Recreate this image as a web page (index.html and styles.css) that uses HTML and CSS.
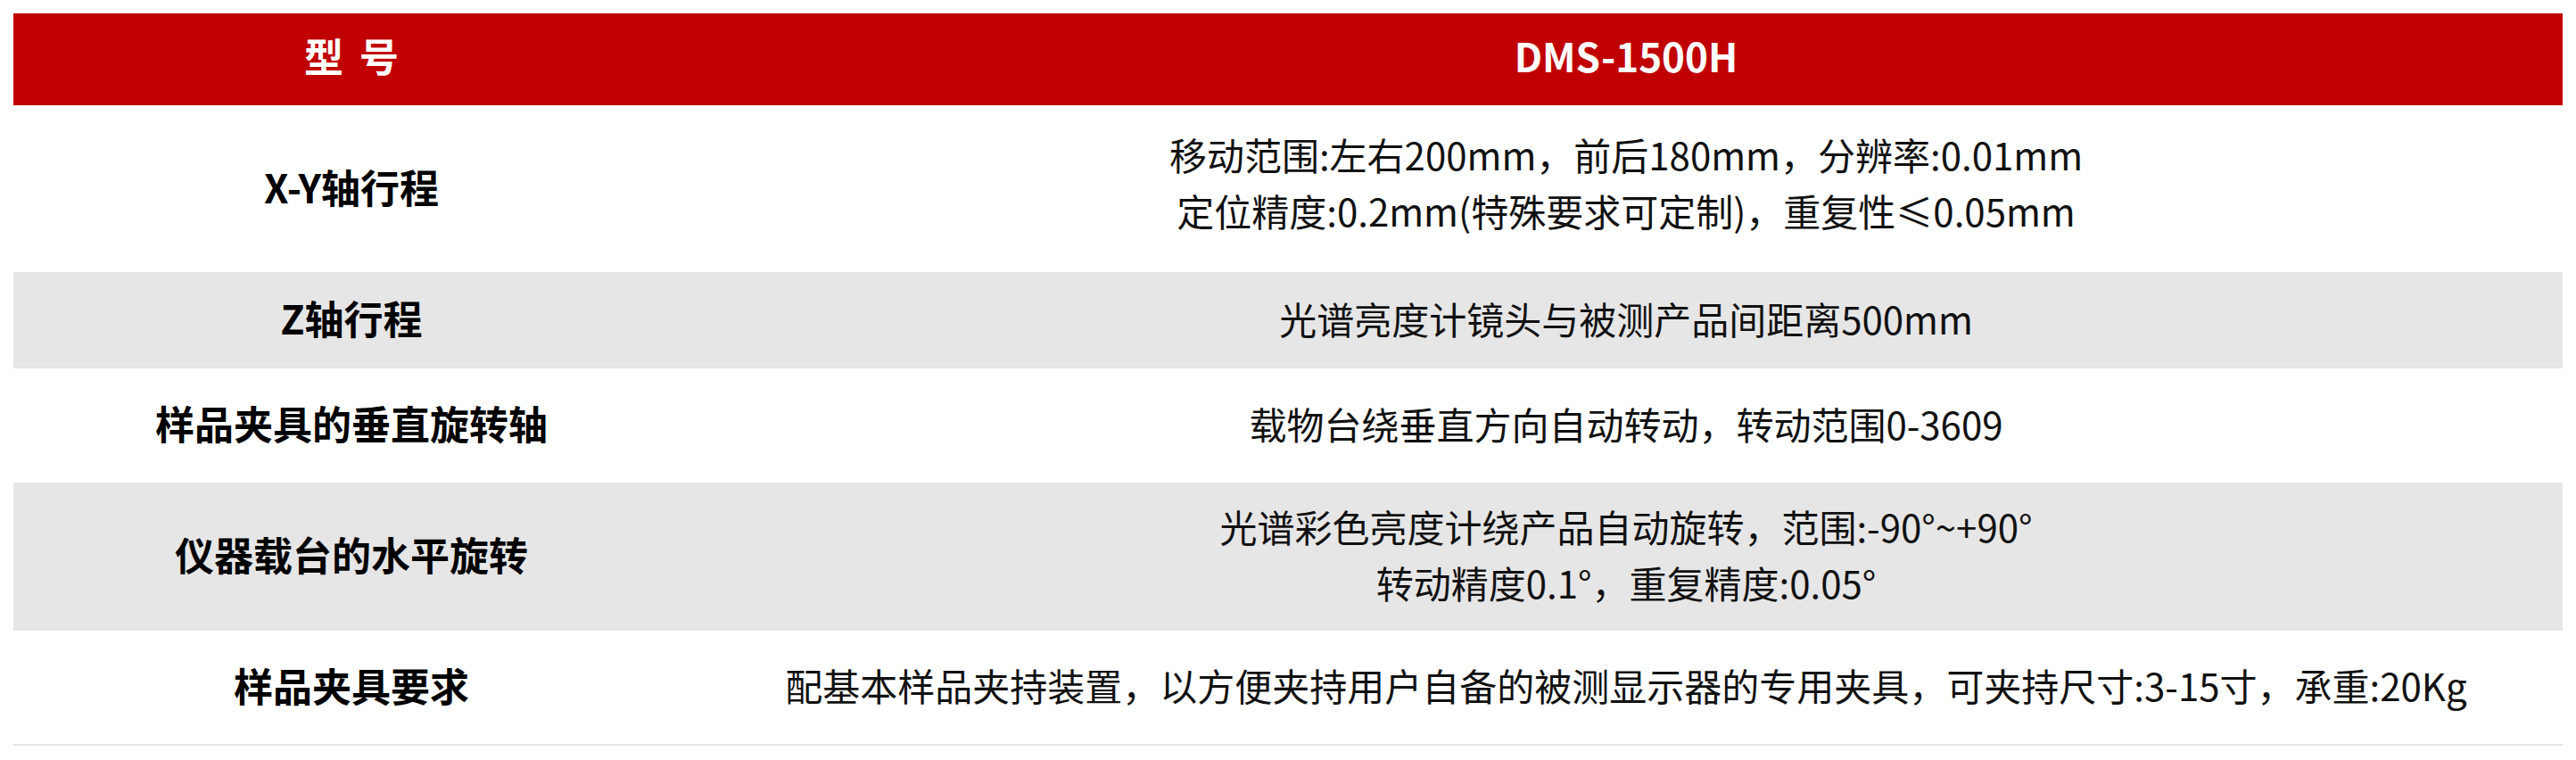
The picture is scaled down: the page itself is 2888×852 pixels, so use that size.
FILE: index.html
```html
<!DOCTYPE html>
<html lang="zh-CN">
<head>
<meta charset="utf-8">
<title>DMS-1500H</title>
<link rel="stylesheet" href="styles.css">
</head>
<body>
<div class="page">
  <table class="spec-table">
    <colgroup>
      <col class="col-name">
      <col class="col-value">
    </colgroup>
    <thead>
      <tr class="head-row">
        <th class="name spaced">型 号</th>
        <th class="value">DMS-1500H</th>
      </tr>
    </thead>
    <tbody>
      <tr class="row r-tall">
        <td class="name">X-Y轴行程</td>
        <td class="value raised">移动范围:左右200mm，前后180mm，分辨率:0.01mm<br>定位精度:0.2mm(特殊要求可定制)，重复性≤0.05mm</td>
      </tr>
      <tr class="row r-short alt">
        <td class="name">Z轴行程</td>
        <td class="value">光谱亮度计镜头与被测产品间距离500mm</td>
      </tr>
      <tr class="row r-mid">
        <td class="name">样品夹具的垂直旋转轴</td>
        <td class="value">载物台绕垂直方向自动转动，转动范围0-3609</td>
      </tr>
      <tr class="row r-two alt">
        <td class="name">仪器载台的水平旋转</td>
        <td class="value">光谱彩色亮度计绕产品自动旋转，范围:-90°~+90°<br>转动精度0.1°，重复精度:0.05°</td>
      </tr>
      <tr class="row r-mid last">
        <td class="name">样品夹具要求</td>
        <td class="value">配基本样品夹持装置，以方便夹持用户自备的被测显示器的专用夹具，可夹持尺寸:3-15寸，承重:20Kg</td>
      </tr>
    </tbody>
  </table>
</div>
</body>
</html>
```

FILE: styles.css
```css
html, body {
  margin: 0;
  padding: 0;
  background: #ffffff;
}

.page {
  padding: 15px 15px 0 15px;
}

.spec-table {
  width: 2858px;
  border-collapse: collapse;
  border-spacing: 0;
  table-layout: fixed;
  font-family: "Noto Sans CJK SC", "Noto Sans", sans-serif;
  color: #000000;
}

.col-name {
  width: 758px;
}

.col-value {
  width: 2100px;
}

.spec-table th,
.spec-table td {
  padding: 0 0 6px 0;
  text-align: center;
  vertical-align: middle;
}

.head-row {
  background: #c00000;
  height: 103px;
}

.spec-table .head-row th {
  color: #ffffff;
  font-size: 44px;
  font-weight: 700;
  line-height: 60px;
  padding-bottom: 10px;
}

.spaced {
  word-spacing: 8px;
}

.row .name {
  font-size: 44px;
  font-weight: 700;
  line-height: 60px;
}

.row .value {
  font-size: 42px;
  font-weight: 400;
  line-height: 63px;
  color: #111111;
}

.spec-table .raised {
  padding-bottom: 15px;
}

.alt {
  background: #e6e6e6;
}

.r-tall { height: 187px; }
.r-short { height: 108px; }
.r-mid { height: 128px; }
.r-two { height: 166px; }

.last td {
  border-bottom: 2px solid #e6e6e6;
}
```
